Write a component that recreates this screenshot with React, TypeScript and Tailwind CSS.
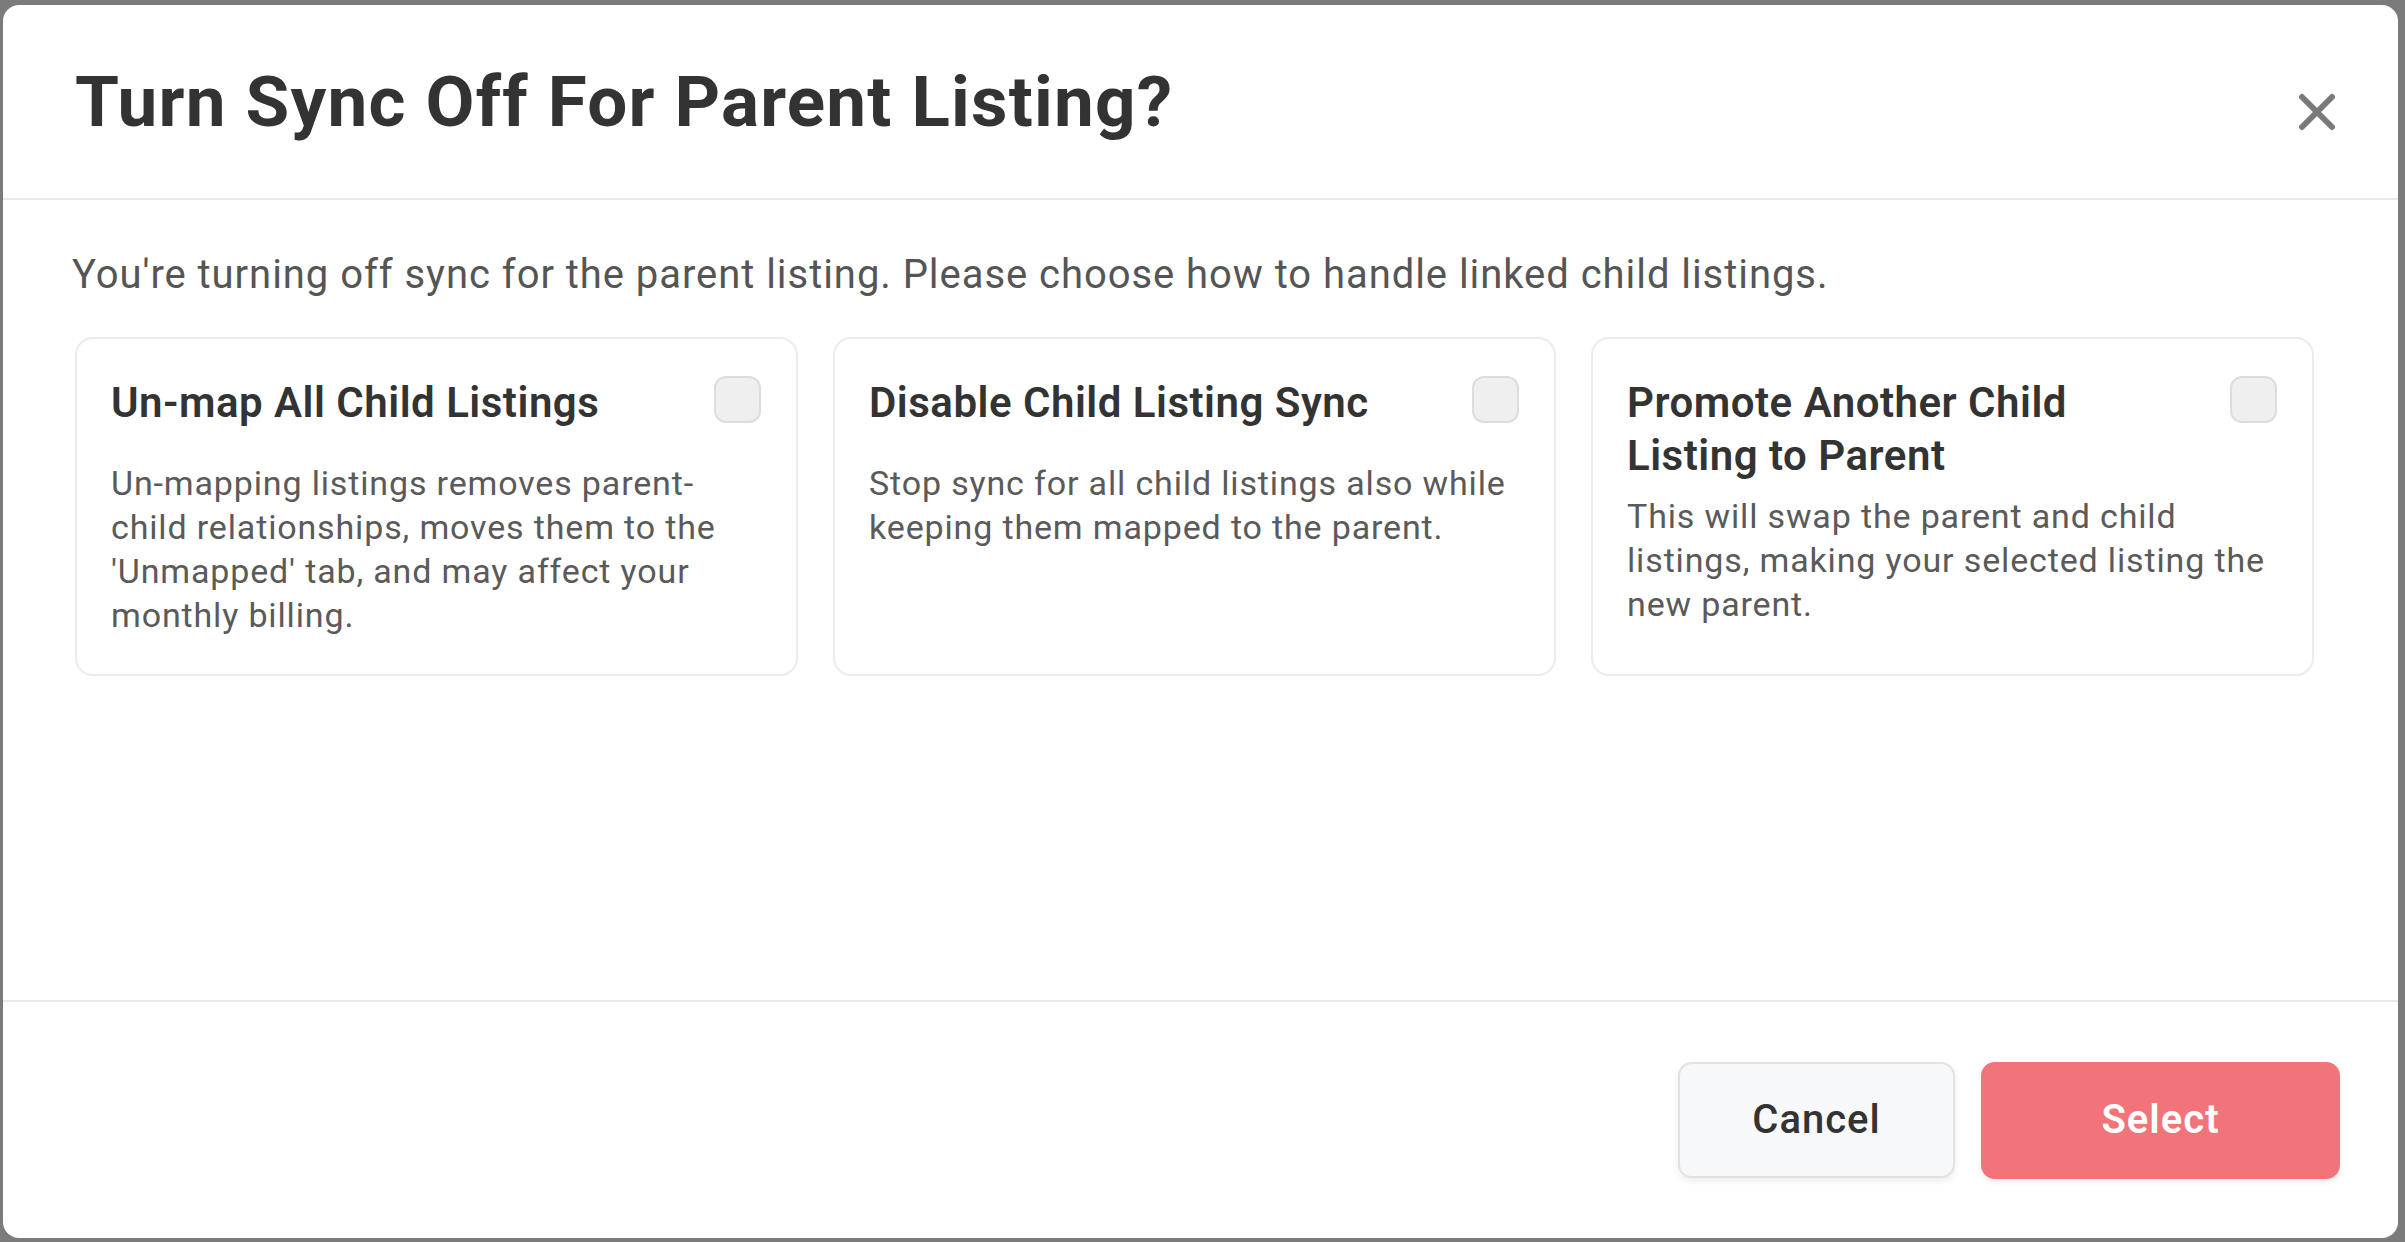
import { useState } from "react"

type SyncOption = {
  id: string
  title: string
  description: string
}

const options: SyncOption[] = [
  {
    id: "unmap",
    title: "Un-map All Child Listings",
    description:
      "Un-mapping listings removes parent-child relationships, moves them to the 'Unmapped' tab, and may affect your monthly billing.",
  },
  {
    id: "disable",
    title: "Disable Child Listing Sync",
    description: "Stop sync for all child listings also while keeping them mapped to the parent.",
  },
  {
    id: "promote",
    title: "Promote Another Child Listing to Parent",
    description:
      "This will swap the parent and child listings, making your selected listing the new parent.",
  },
]

function CloseIcon() {
  return (
    <svg width="38" height="38" viewBox="0 0 38 38" fill="none">
      <path d="M4 4L34 34M34 4L4 34" stroke="#7a7a7a" strokeWidth="6" strokeLinecap="round" />
    </svg>
  )
}

function OptionCard({
  option,
  checked,
  onToggle,
}: {
  option: SyncOption
  checked: boolean
  onToggle: () => void
}) {
  return (
    <div className="flex w-[723px] flex-col rounded-[18px] border-2 border-[#ececec] bg-white pb-[37px] pl-[34px] pr-[35px] pt-[37px]">
      <div className="flex min-h-[73px] items-start justify-between">
        <h3 className="max-w-[540px] text-[42px] font-semibold leading-[53px] tracking-[0.5px] text-[#333333]">
          {option.title}
        </h3>
        <button
          type="button"
          onClick={onToggle}
          className={
            checked
              ? "h-[47px] w-[47px] shrink-0 rounded-[12px] border-2 border-[#f07479] bg-[#f07479]"
              : "h-[47px] w-[47px] shrink-0 rounded-[12px] border-2 border-[#dddddd] bg-[#efefef]"
          }
        />
      </div>
      <p className="mt-[12px] text-[34px] leading-[44px] tracking-[0.85px] text-[#5a5a5a]">
        {option.description}
      </p>
    </div>
  )
}

export default function App() {
  const [selected, setSelected] = useState<string | null>(null)

  return (
    <div
      className="h-[1242px] w-full overflow-hidden bg-[#7b7b7b] pl-[3px] pt-[5px]"
      style={{ fontFamily: "Roboto, 'Noto Sans', sans-serif" }}
    >
      <div className="flex h-[1233px] w-[2395px] flex-col rounded-[16px] bg-white">
        <div className="flex h-[195px] shrink-0 items-center justify-between border-b-2 border-[#e9e9e9] pl-[72px] pr-[62px]">
          <h2 className="text-[71px] font-bold leading-[84px] tracking-[1.2px] text-[#333333]">
            Turn Sync Off For Parent Listing?
          </h2>
          <button type="button" className="mt-[20px]">
            <CloseIcon />
          </button>
        </div>

        <div className="flex flex-1 flex-col pl-[69px] pt-[47px]">
          <p className="text-[40px] leading-[56px] tracking-[0.95px] text-[#555555]">
            You're turning off sync for the parent listing. Please choose how to handle linked child listings.
          </p>
          <div className="mt-[34px] flex gap-[35px] pl-[3px]">
            {options.map((option) => (
              <OptionCard
                key={option.id}
                option={option}
                checked={selected === option.id}
                onToggle={() => setSelected(selected === option.id ? null : option.id)}
              />
            ))}
          </div>
        </div>

        <div className="flex h-[238px] shrink-0 items-center justify-end gap-[26px] border-t-2 border-[#e9e9e9] pr-[58px]">
          <button
            type="button"
            className="h-[116px] w-[277px] rounded-[14px] border-2 border-[#e2e2e2] bg-[#f7f8fa] text-[40px] font-medium tracking-[1px] text-[#333333] shadow-[0_3px_6px_rgba(0,0,0,0.08)]"
          >
            Cancel
          </button>
          <button
            type="button"
            className="h-[117px] w-[359px] rounded-[14px] bg-[#f07479] text-[40px] font-semibold tracking-[1px] text-white shadow-[0_3px_6px_rgba(0,0,0,0.08)]"
          >
            Select
          </button>
        </div>
      </div>
    </div>
  )
}
